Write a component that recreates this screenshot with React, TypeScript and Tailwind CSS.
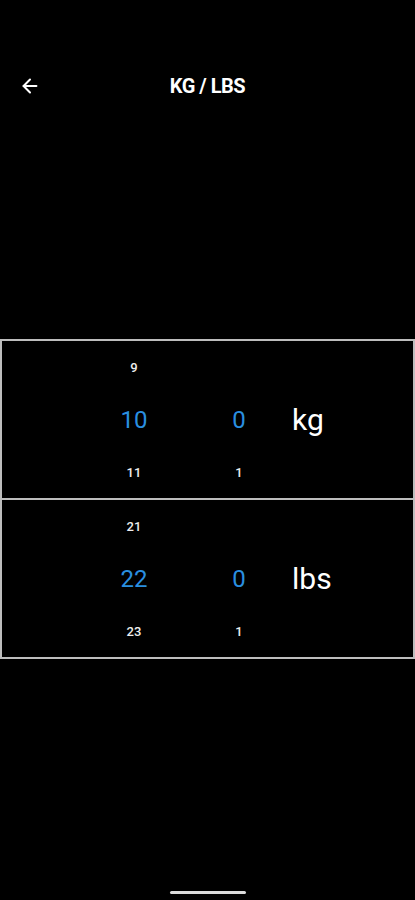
import { ArrowLeft } from 'lucide-react'

type Row = { prev: string; value: string; next: string }

const PICKERS: { cols: Row[]; unit: string }[] = [
  {
    cols: [
      { prev: '9', value: '10', next: '11' },
      { prev: '', value: '0', next: '1' },
    ],
    unit: 'kg',
  },
  {
    cols: [
      { prev: '21', value: '22', next: '23' },
      { prev: '', value: '0', next: '1' },
    ],
    unit: 'lbs',
  },
]

function Wheel({ row }: { row: Row }) {
  return (
    <div className="flex flex-col w-[60px] text-center">
      <div className="h-[52px] pt-[1px] flex items-center justify-center text-[13px] font-medium text-[#ededed]">{row.prev}</div>
      <div className="h-[53px] flex items-center justify-center text-[24px] text-[#2a8fe0]">{row.value}</div>
      <div className="h-[52px] pt-[2px] flex items-center justify-center text-[13px] font-medium text-[#ededed]">{row.next}</div>
    </div>
  )
}

export default function App() {
  return (
    <div className="w-[415px] h-[900px] bg-black flex flex-col text-white font-['Roboto','Noto_Sans',sans-serif] overflow-hidden">
      {/* Header */}
      <div className="relative h-[52px] mt-[60px] flex items-center justify-center">
        <button className="absolute left-[19px] p-0 text-white">
          <ArrowLeft size={22} strokeWidth={2.2} />
        </button>
        <span className="text-[20px] font-bold tracking-tight">KG / LBS</span>
      </div>

      {/* Pickers */}
      <div className="mt-[227px] border-2 border-[#bdbdbd]">
        {PICKERS.map((p, i) => (
          <div key={p.unit} className={`flex pl-[102px] ${i === 0 ? 'border-b-2 border-[#bdbdbd]' : ''}`}>
            <Wheel row={p.cols[0]} />
            <div className="w-[45px]" />
            <Wheel row={p.cols[1]} />
            <div className="ml-[23px] flex flex-col">
              <div className="h-[52px]" />
              <div className="h-[53px] flex items-center text-[30px] text-white">{p.unit}</div>
              <div className="h-[52px]" />
            </div>
          </div>
        ))}
      </div>

      <div className="flex-1" />
      <div className="flex justify-center pb-[6px]">
        <div className="w-[76px] h-[3px] rounded-full bg-[#dcdcdc]" />
      </div>
    </div>
  )
}
